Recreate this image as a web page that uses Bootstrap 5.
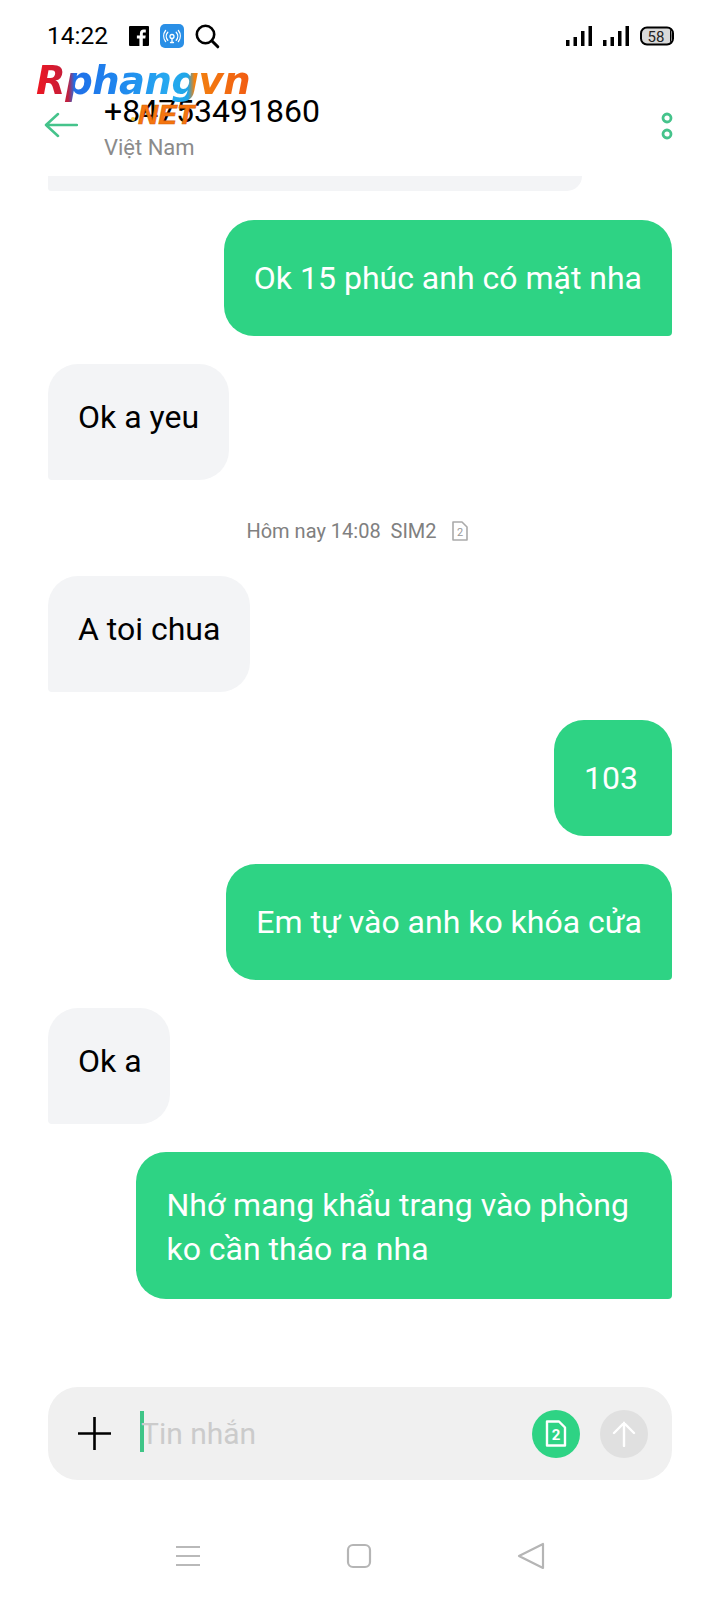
<!DOCTYPE html>
<html lang="vi">
<head>
  <meta charset="UTF-8" />
  <title>Tin nhắn</title>
  <link href="https://cdn.jsdelivr.net/npm/bootstrap@5.3.0/dist/css/bootstrap.min.css" rel="stylesheet" />
  <style>
    body {
      width: 720px;
      height: 1600px;
      overflow: hidden;
      background: #fff;
      color: #000;
      font-family: Roboto, "Noto Sans", sans-serif;
    }
    .screen { width: 720px; height: 1600px; position: relative; }

    .status-row { height: 72px; padding: 0 46px 0 47px; font-size: 24.500px; }
    .status-icons { margin-left: 21px; gap: 11px; }
    .battery-icon { margin-left: 11px; }

    .head-row { height: 104px; padding-left: 44px; padding-right: 46px; }
    .head-text { margin-left: 26px; margin-top: 10px; }
    .head-phone { font-size: 32px; line-height: 38px; }
    .head-place { font-size: 22px; line-height: 36px; color: #8b8b8b; }
    .head-back { margin-top: 2px; }
    .head-more { margin-top: 3px; }

    .watermark {
      position: absolute;
      left: 36px;
      top: 58px;
      font-family: "DejaVu Sans", sans-serif;
      font-style: italic;
      font-weight: 700;
    }
    .wm-name {
      font-size: 38.500px;
      line-height: 46px;
      letter-spacing: -.5px;
      background: linear-gradient(90deg, #ee1620 0, #c01f3e 15%, #1f6fe8 18%, #1f86ee 38%, #27aaf0 62%, #1fa6e8 71%, #f2820f 74%, #f25c12 100%);
      -webkit-background-clip: text;
      background-clip: text;
      color: transparent;
    }
    .wm-net {
      position: absolute;
      left: 102px;
      top: 42px;
      font-family: "Liberation Sans", sans-serif;
      font-size: 28px;
      line-height: 30px;
      font-weight: 700;
      color: #f5750f;
      -webkit-text-stroke: .6px #d65f08;
    }
    .wm-dot {
      position: absolute;
      left: 95px;
      top: 59px;
      width: 4px;
      height: 4px;
      border-radius: 50%;
      background: #f0c63a;
    }

    .chat-list { padding: 0 48px; font-size: 32px; }
    .top-cut {
      width: 534px;
      height: 15px;
      background: #f3f4f6;
      border-radius: 0 0 30px 6px;
    }
    .bubble {
      padding: 0 30px;
      margin-top: 28px;
      height: 116px;
      line-height: 44px;
      border-radius: 30px;
    }
    .bubble-tall { height: 147px; padding: 31px 43px 32px 30px; }
    .bubble-short { padding-right: 34px; }
    .bubble-tiny { padding-right: 28px; }
    .from-them { background: #f3f4f6; border-bottom-left-radius: 4px; padding-bottom: 10px; }
    .from-me { background: #2ed384; color: #fff; border-bottom-right-radius: 4px; }
    .top-gap { margin-top: 29px; }

    .time-row { height: 96px; margin-bottom: -28px; padding: 6px 5px 0 0; font-size: 20px; color: #808080; gap: 14px; }

    .composer {
      position: absolute;
      left: 48px;
      top: 1387px;
      width: 624px;
      height: 93px;
      background: #f0f0f0;
      border-radius: 30px;
      padding: 0 24px 0 30px;
    }
    .caret-bar { width: 4px; height: 41px; background: #3fc587; margin-left: 29px; margin-top: -4px; }
    .hint { font-size: 30px; color: #cbcbcb; margin-left: -3px; margin-top: -1px; }
    .round-btn { width: 48px; height: 48px; border-radius: 50%; }
    .round-green { background: #2ed384; }
    .round-grey { background: #e0e0e0; margin-left: 20px; }

    .nav-row {
      position: absolute;
      left: 0;
      top: 1540px;
      width: 720px;
      height: 32px;
    }
    .nav-slot { position: absolute; }
    .nav-menu { left: 175px; top: 3px; }
    .nav-home { left: 346px; top: 3px; }
    .nav-back { left: 517px; top: 2px; }
  </style>
</head>
<body>
<div class="screen d-flex flex-column">

  <div class="status-row d-flex align-items-center">
    <span>14:22</span>
    <div class="status-icons d-flex align-items-center">
      <svg width="20" height="20" viewBox="0 0 20 20"><rect width="20" height="20" rx="1" fill="#000"/><path d="M13.8 20v-7.400h2.500l.4-3h-2.900V7.800c0-.9.3-1.400 1.500-1.400h1.500V3.700c-.3 0-1.200-.1-2.200-.1-2.200 0-3.700 1.300-3.700 3.800v2.200H7.900v3h2.500V20z" fill="#fff"/></svg>
      <svg width="24" height="24" viewBox="0 0 24 24"><rect width="24" height="24" rx="5" fill="#2a8fe6"/><circle cx="12" cy="12.500" r="2" fill="none" stroke="#fff" stroke-width="1.300"/><path d="M12 14.500v4M10.500 18.500h3M7.800 8.200a6 6 0 0 0 0 8M16.200 8.200a6 6 0 0 1 0 8M5.600 6.500a9 9 0 0 0 0 11M18.400 6.500a9 9 0 0 1 0 11" fill="none" stroke="#fff" stroke-width="1.300" stroke-linecap="round"/></svg>
      <svg width="25" height="25" viewBox="0 0 25 25"><circle cx="10.500" cy="10.500" r="8.700" fill="none" stroke="#000" stroke-width="2.600"/><path d="M16.800 16.800l6 6" stroke="#000" stroke-width="3" stroke-linecap="round"/></svg>
    </div>
    <div class="ms-auto d-flex align-items-center">
      <svg width="63" height="20" viewBox="0 0 63 20" fill="#000"><rect x="0" y="14" width="3.500" height="6"/><rect x="7.500" y="11" width="3.500" height="9"/><rect x="15" y="5" width="3.500" height="15"/><rect x="22.500" y="0" width="3.500" height="20"/><rect x="37" y="14" width="3.500" height="6"/><rect x="44.500" y="11" width="3.500" height="9"/><rect x="52" y="5" width="3.500" height="15"/><rect x="59.500" y="0" width="3.500" height="20"/></svg>
      <svg class="battery-icon" width="34" height="20" viewBox="0 0 34 20"><rect x="1" y="1.500" width="32" height="17" rx="6" fill="#d9d9d9" stroke="#000" stroke-width="2"/><path d="M30 3c2 2 2 12 0 14" fill="#000"/><text x="16" y="15.500" text-anchor="middle" font-family="Roboto, sans-serif" font-size="15" fill="#222">58</text></svg>
    </div>
  </div>

  <div class="head-row d-flex align-items-center">
    <svg class="head-back" width="34" height="26" viewBox="0 0 34 26"><path d="M33 13H2M14 2 2 13l12 11" fill="none" stroke="#45c38b" stroke-width="2.500" stroke-linecap="round" stroke-linejoin="round"/></svg>
    <div class="head-text">
      <div class="head-phone">+84753491860</div>
      <div class="head-place">Việt Nam</div>
    </div>
    <svg class="head-more ms-auto" width="14" height="30" viewBox="0 0 14 30"><circle cx="7" cy="7" r="4" fill="none" stroke="#45c38b" stroke-width="2.800"/><circle cx="7" cy="23" r="4" fill="none" stroke="#45c38b" stroke-width="2.800"/></svg>
  </div>

  <div class="chat-list d-flex flex-column">
    <div class="top-cut"></div>
    <div class="bubble top-gap from-me align-self-end d-flex align-items-center">Ok 15 phúc anh có mặt nha</div>
    <div class="bubble from-them align-self-start d-flex align-items-center">Ok a yeu</div>
    <div class="time-row d-flex align-items-center justify-content-center">
      <span>Hôm nay 14:08&nbsp; SIM2</span>
      <svg width="18" height="20" viewBox="0 0 18 20"><path d="M2 1h9l5 5v13H2z" fill="none" stroke="#aaa" stroke-width="1.600" stroke-linejoin="round"/><text x="9" y="15" text-anchor="middle" font-family="Roboto, sans-serif" font-size="11" fill="#999">2</text></svg>
    </div>
    <div class="bubble from-them align-self-start d-flex align-items-center">A toi chua</div>
    <div class="bubble bubble-short from-me align-self-end d-flex align-items-center">103</div>
    <div class="bubble from-me align-self-end d-flex align-items-center">Em tự vào anh ko khóa cửa</div>
    <div class="bubble bubble-tiny from-them align-self-start d-flex align-items-center">Ok a</div>
    <div class="bubble bubble-tall from-me align-self-end">Nhớ mang khẩu trang vào phòng<br>ko cần tháo ra nha</div>
  </div>

  <div class="composer d-flex align-items-center">
    <svg width="33" height="33" viewBox="0 0 33 33"><path d="M16.500 0v33M0 16.500h33" stroke="#000" stroke-width="2.600"/></svg>
    <div class="caret-bar"></div>
    <span class="hint">Tin nhắn</span>
    <div class="round-btn round-green ms-auto d-flex align-items-center justify-content-center">
      <svg width="22" height="27" viewBox="0 0 22 27"><path d="M2 1.500h12l6 6v18H2z" fill="none" stroke="#fff" stroke-width="2.400" stroke-linejoin="round"/><text x="11" y="20" text-anchor="middle" font-family="Roboto, sans-serif" font-weight="700" font-size="15" fill="#fff">2</text></svg>
    </div>
    <div class="round-btn round-grey d-flex align-items-center justify-content-center">
      <svg width="24" height="26" viewBox="0 0 24 26"><path d="M12 25V2M2 12 12 2l10 10" fill="none" stroke="#fff" stroke-width="2.400" stroke-linecap="round"/></svg>
    </div>
  </div>

  <div class="nav-row">
    <svg class="nav-slot nav-menu" width="26" height="24" viewBox="0 0 26 24"><path d="M1 4h24M1 13h24M1 22h24" stroke="#b9b9b9" stroke-width="2"/></svg>
    <svg class="nav-slot nav-home" width="26" height="26" viewBox="0 0 26 26"><rect x="2" y="2" width="22" height="22" rx="5" fill="none" stroke="#b5b5b5" stroke-width="2.200"/></svg>
    <svg class="nav-slot nav-back" width="28" height="28" viewBox="0 0 28 28"><path d="M26 2v24L2 14z" fill="none" stroke="#b5b5b5" stroke-width="2.200" stroke-linejoin="round"/></svg>
  </div>

  <div class="watermark">
    <div class="wm-name">Rphangvn</div>
    <div class="wm-net">NET</div>
    <div class="wm-dot"></div>
  </div>
</div>
<script src="https://cdn.jsdelivr.net/npm/bootstrap@5.3.0/dist/js/bootstrap.bundle.min.js"></script>
</body>
</html>
